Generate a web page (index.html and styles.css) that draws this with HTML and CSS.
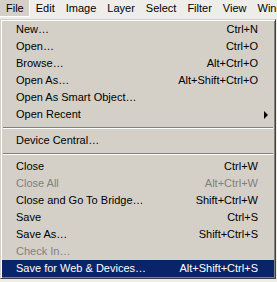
FILE: index.html
```html
<!DOCTYPE html>
<html lang="en">
<head>
    <meta charset="UTF-8">
    <title>File Menu</title>
    <link rel="stylesheet" href="styles.css">
</head>
<body>
    <div class="menubar">
        <span class="menubar-item active">File</span>
        <span class="menubar-item">Edit</span>
        <span class="menubar-item">Image</span>
        <span class="menubar-item">Layer</span>
        <span class="menubar-item">Select</span>
        <span class="menubar-item">Filter</span>
        <span class="menubar-item">View</span>
        <span class="menubar-item">Window</span>
    </div>

    <div class="menu">
        <div class="item"><span>New…</span><span>Ctrl+N</span></div>
        <div class="item"><span>Open…</span><span>Ctrl+O</span></div>
        <div class="item"><span>Browse…</span><span>Alt+Ctrl+O</span></div>
        <div class="item"><span>Open As…</span><span>Alt+Shift+Ctrl+O</span></div>
        <div class="item"><span>Open As Smart Object…</span><span></span></div>
        <div class="item submenu"><span>Open Recent</span><span></span></div>
        <div class="separator"></div>
        <div class="item"><span>Device Central…</span><span></span></div>
        <div class="separator"></div>
        <div class="item"><span>Close</span><span>Ctrl+W</span></div>
        <div class="item disabled"><span>Close All</span><span>Alt+Ctrl+W</span></div>
        <div class="item"><span>Close and Go To Bridge…</span><span>Shift+Ctrl+W</span></div>
        <div class="item"><span>Save</span><span>Ctrl+S</span></div>
        <div class="item"><span>Save As…</span><span>Shift+Ctrl+S</span></div>
        <div class="item disabled"><span>Check In…</span><span></span></div>
        <div class="item selected"><span>Save for Web &amp; Devices…</span><span>Alt+Shift+Ctrl+S</span></div>
    </div>
</body>
</html>
```

FILE: styles.css
```css
body {
    margin: 0;
    background-color: #eeede9;
    font-family: "Liberation Sans", Arial, sans-serif;
    font-size: 11px;
    color: #000;
    overflow: hidden;
}
.menubar {
    display: flex;
    gap: 1px;
    height: 18px;
    white-space: nowrap;
}
.menubar-item {
    padding: 0 5px;
    line-height: 17px;
    height: 17px;
    box-sizing: border-box;
}
.menubar-item.active {
    padding-left: 6px;
    background-color: #d4d0c8;
    border-right: 1px solid #fff;
    border-bottom: 1px solid #fff;
}
.menu {
    width: 276px;
    margin-top: 1px;
    box-sizing: border-box;
    padding: 1px;
    background-color: #d4d0c8;
    border: 1px solid;
    border-color: #d4d0c8 #404040 #404040 #d4d0c8;
    box-shadow: inset 1px 1px 0 #fff, inset -1px -1px 0 #808080;
}
.item {
    position: relative;
    display: flex;
    justify-content: space-between;
    height: 17px;
    line-height: 17px;
    padding: 0 16px 0 14px;
    white-space: nowrap;
}
.item.disabled {
    color: #808080;
}
.item.selected {
    background-color: #0a246a;
    color: #fff;
}
.submenu::after {
    content: "";
    position: absolute;
    right: 6px;
    top: 5px;
    border-left: 4px solid #000;
    border-top: 4px solid transparent;
    border-bottom: 4px solid transparent;
}
.separator {
    height: 9px;
    margin: 0 1px;
    box-sizing: border-box;
    padding-top: 4px;
}
.separator::before {
    content: "";
    display: block;
    border-top: 1px solid #808080;
    border-bottom: 1px solid #fff;
}
```
